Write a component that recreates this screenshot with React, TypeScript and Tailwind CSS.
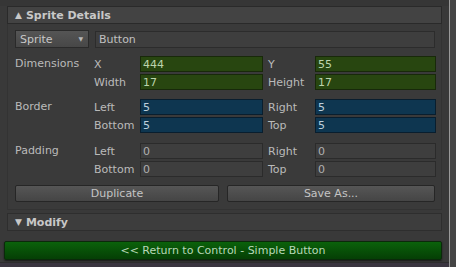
import React from "react";

const font = { fontFamily: '"DejaVu Sans", "Liberation Sans", sans-serif' };

type Kind = "green" | "blue" | "gray";

function Field({ value, kind }: { value: string; kind: Kind }) {
  const cls =
    kind === "green"
      ? "bg-[#284610] border-[#18290a] text-[#bcd4ac]"
      : kind === "blue"
      ? "bg-[#0e3650] border-[#091e2e] text-[#bccfdc]"
      : "bg-[#3e3e3e] border-[#2b2b2b] text-[#b0b0b0]";
  return (
    <div className={`h-[16px] border ${cls} flex items-center pl-[2px] text-[11px] leading-none`}>
      {value}
    </div>
  );
}

function Pair({ l1, v1, l2, v2, kind }: { l1: string; v1: string; l2: string; v2: string; kind: Kind }) {
  return (
    <div className="flex items-center h-[16px]">
      <div className="w-[46px] text-[#bababa] text-[11px] leading-none">{l1}</div>
      <div className="w-[123px]"><Field value={v1} kind={kind} /></div>
      <div className="w-[52px] pl-[5px] text-[#bababa] text-[11px] leading-none">{l2}</div>
      <div className="w-[121px]"><Field value={v2} kind={kind} /></div>
    </div>
  );
}

export default function App() {
  const section = (
    label: string,
    r1: [string, string, string, string],
    r2: [string, string, string, string],
    kind: Kind
  ) => (
    <div className="flex">
      <div className="w-[79px] pt-[1px] text-[#bababa] text-[11px] leading-[14px]">{label}</div>
      <div className="flex flex-col gap-[2px]">
        <Pair l1={r1[0]} v1={r1[1]} l2={r1[2]} v2={r1[3]} kind={kind} />
        <Pair l1={r2[0]} v1={r2[1]} l2={r2[2]} v2={r2[3]} kind={kind} />
      </div>
    </div>
  );

  return (
    <div style={font} className="w-[456px] h-[267px] bg-[#393939] overflow-hidden flex">
      <div className="w-[449px] flex flex-col">
        <div className="h-[6px] bg-[#363636]" />
        <div className="ml-[7px] w-[435px] h-[18px] border border-[#2a2a2a] bg-[#434343] flex items-center pl-[7px] text-[11px] font-bold text-[#c8c8c8] leading-none">
          <span className="text-[9px] mr-[4px]">▲</span>Sprite Details
        </div>
        <div className="ml-[7px] w-[435px] h-[186px] border-x border-b border-[#333333] bg-[#3a3a3a] flex flex-col pt-[6px] pl-[7px]">
          <div className="flex items-center h-[18px]">
            <div className="w-[74px] h-[18px] border border-[#2a2a2a] bg-gradient-to-b from-[#555555] to-[#474747] flex items-center justify-between pl-[4px] pr-[5px] text-[11px] text-[#c8c8c8] leading-none">
              <span>Sprite</span>
              <span className="text-[6px] text-[#b8b8b8]">▼</span>
            </div>
            <div className="ml-[6px] w-[340px] h-[17px] border border-[#2c2c2c] bg-[#3e3e3e] flex items-center pl-[3px] text-[11px] text-[#c0c0c0] leading-none">
              Button
            </div>
          </div>
          <div className="h-[8px]" />
          {section("Dimensions", ["X", "444", "Y", "55"], ["Width", "17", "Height", "17"], "green")}
          <div className="h-[9px]" />
          {section("Border", ["Left", "5", "Right", "5"], ["Bottom", "5", "Top", "5"], "blue")}
          <div className="h-[10px]" />
          {section("Padding", ["Left", "0", "Right", "0"], ["Bottom", "0", "Top", "0"], "gray")}
          <div className="h-[8px]" />
          <div className="flex gap-[8px]">
            <div className="w-[204px] h-[17px] border border-[#262626] bg-gradient-to-b from-[#565656] to-[#454545] rounded-[2px] flex items-center justify-center text-[11px] text-[#c4c4c4] leading-none">
              Duplicate
            </div>
            <div className="w-[208px] h-[17px] border border-[#262626] bg-gradient-to-b from-[#565656] to-[#454545] rounded-[2px] flex items-center justify-center text-[11px] text-[#c4c4c4] leading-none">
              Save As...
            </div>
          </div>
        </div>
        <div className="h-[3px]" />
        <div className="ml-[7px] w-[435px] h-[18px] border border-[#2e2e2e] bg-[#3d3d3d] flex items-center pl-[7px] text-[11px] font-bold text-[#c8c8c8] leading-none">
          <span className="text-[9px] mr-[4px]">▼</span>Modify
        </div>
        <div className="h-[10px]" />
        <div className="ml-[4px] w-[438px] h-[19px] border border-[#0a2a0a] bg-gradient-to-b from-[#0b620b] to-[#053f05] rounded-[2px] flex items-center justify-center text-[11px] text-[#b8d8b8] leading-none shadow-[0_1px_2px_rgba(0,0,0,0.6)]">
          &lt;&lt; Return to Control - Simple Button
        </div>
        <div className="flex-1" />
        <div className="h-[5px] bg-[#3a3540] border-t border-[#2d2d2d]" />
      </div>
      <div className="w-[1px] bg-[#9a9a9a]" />
      <div className="flex-1 bg-[#454545]" />
    </div>
  );
}
